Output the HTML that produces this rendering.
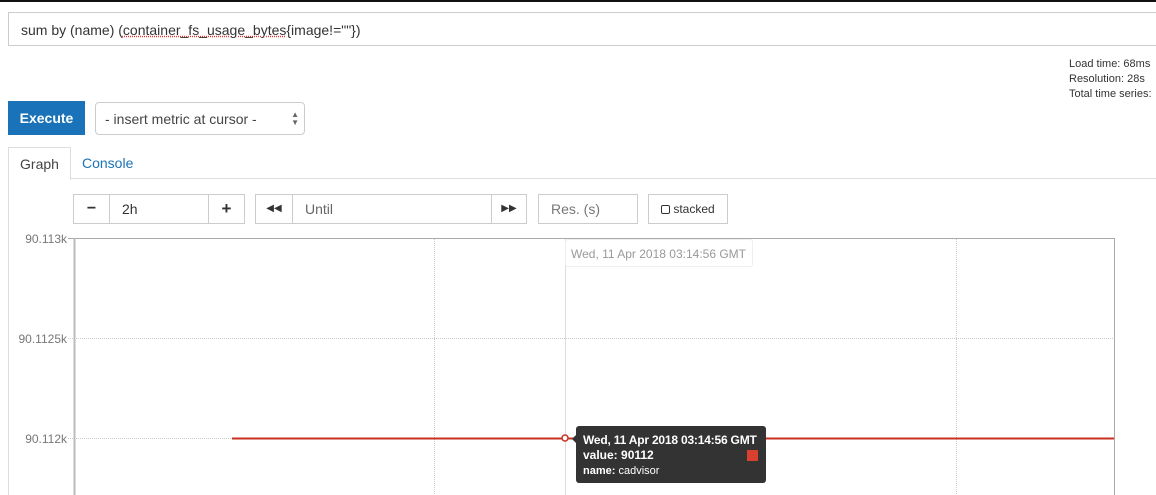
<!DOCTYPE html>
<html><head><style>
body{margin:0;width:1156px;height:495px;overflow:hidden;background:#fff;font-family:"Liberation Sans",Arial,sans-serif;position:relative}
.a{position:absolute}
.btn{position:absolute;border:1px solid #ccc;box-sizing:border-box;background:#fff;font-size:14px;color:#333}
</style></head><body>
<div class="a" style="left:0;top:0;width:1156px;height:2px;background:#111"></div>
<div class="a" style="left:8px;top:12px;width:1160px;height:34px;border:1px solid #ccc;box-sizing:border-box;font-size:14px;color:#333;padding:9px 0 0 12px">sum by (name) (<span style="text-decoration:underline dotted #e33">container_fs_usage_bytes</span>{image!=""})</div>
<div class="a" style="left:1069px;top:57px;font-size:11px;line-height:15px;color:#333">Load time: 68ms<br>Resolution: 28s<br>Total time series:</div>
<div class="a" style="left:8px;top:101px;width:77px;height:34px;background:#1a73b8;color:#fff;font-size:14px;font-weight:bold;text-align:center;line-height:34px">Execute</div>
<div class="a" style="left:95px;top:102px;width:210px;height:33px;border:1px solid #ccc;border-radius:4px;box-sizing:border-box;font-size:14px;color:#444;padding:8px 0 0 9px">- insert metric at cursor -<span style="position:absolute;right:5px;top:8px;font-size:8px;line-height:8px;color:#666">▲<br>▼</span></div>
<div class="a" style="left:70px;top:178px;width:1086px;height:1px;background:#ddd"></div>
<div class="a" style="left:8px;top:147px;width:61px;height:32px;border:1px solid #ddd;border-bottom:none;background:#fff;font-size:14px;color:#444;text-align:center;line-height:32px">Graph</div>
<div class="a" style="left:8px;top:179px;width:1px;height:316px;background:#ddd"></div>
<div class="a" style="left:82px;top:155px;font-size:14px;color:#1a73b8">Console</div>
<div class="btn" style="left:73px;top:194px;width:37px;height:30px;text-align:center;line-height:28px;font-weight:bold;font-size:16px">−</div>
<div class="btn" style="left:109px;top:194px;width:100px;height:30px;line-height:28px;padding-left:12px">2h</div>
<div class="btn" style="left:208px;top:194px;width:37px;height:30px;text-align:center;line-height:28px;font-weight:bold;font-size:17px">+</div>
<div class="btn" style="left:255px;top:194px;width:38px;height:30px;text-align:center;line-height:28px;font-size:10px">◀◀</div>
<div class="btn" style="left:292px;top:194px;width:200px;height:30px;line-height:28px;padding-left:12px;color:#666">Until</div>
<div class="btn" style="left:491px;top:194px;width:36px;height:30px;text-align:center;line-height:28px;font-size:10px">▶▶</div>
<div class="btn" style="left:538px;top:194px;width:100px;height:30px;line-height:28px;padding-left:12px;color:#777">Res. (s)</div>
<div class="btn" style="left:648px;top:194px;width:80px;height:30px;line-height:28px;font-size:12px;padding-left:12px"><span style="display:inline-block;width:7px;height:7px;border:1.5px solid #333;border-radius:2px;vertical-align:-1px"></span> stacked</div>
<svg class="a" style="left:0;top:0" width="1156" height="495">
<g font-size="12" fill="#777" text-anchor="end" font-family="Liberation Sans,Arial">
<text x="67" y="243">90.113k</text><text x="67" y="343">90.1125k</text><text x="67" y="443">90.112k</text></g>
<line x1="68" y1="238.5" x2="1114" y2="238.5" stroke="#aaa"/>
<line x1="68" y1="338.5" x2="1114" y2="338.5" stroke="#ccc" stroke-dasharray="1,1"/>
<line x1="68" y1="438.5" x2="1114" y2="438.5" stroke="#ccc" stroke-dasharray="1,1"/>
<line x1="434.5" y1="239" x2="434.5" y2="495" stroke="#ccc" stroke-dasharray="1,1"/>
<line x1="956.5" y1="239" x2="956.5" y2="495" stroke="#ccc" stroke-dasharray="1,1"/>
<line x1="565.5" y1="239" x2="565.5" y2="495" stroke="#ddd"/>
<line x1="74.5" y1="238" x2="74.5" y2="495" stroke="#bbb" stroke-width="2"/>
<line x1="1114.5" y1="238" x2="1114.5" y2="495" stroke="#aaa"/>
<line x1="232" y1="438.5" x2="1114" y2="438.5" stroke="#c8301f" stroke-width="2"/>
<circle cx="565" cy="438" r="3" fill="#fff" stroke="#c8301f" stroke-width="1.5"/>
</svg>
<div class="a" style="left:565px;top:239px;width:188px;height:28px;border:1px solid #eee;border-radius:3px;box-sizing:border-box;font-size:12px;color:#999;padding:7px 0 0 5px">Wed, 11 Apr 2018 03:14:56 GMT</div>
<div class="a" style="left:576px;top:426px;width:190px;height:57px;background:#333;border-radius:3px;color:#fff;font-size:12px;box-sizing:border-box;padding:7px 0 0 7px;line-height:15px">
<div style="position:absolute;left:-4px;top:9px;border:4px solid transparent;border-right-color:#333;border-left:0"></div>
<b style="letter-spacing:-0.2px">Wed, 11 Apr 2018 03:14:56 GMT</b><br><b>value: 90112</b><br><span style="font-size:11px"><b>name:</b> cadvisor</span>
<div style="position:absolute;left:171px;top:24px;width:11px;height:11px;background:#d9402e"></div></div>
</body></html>
